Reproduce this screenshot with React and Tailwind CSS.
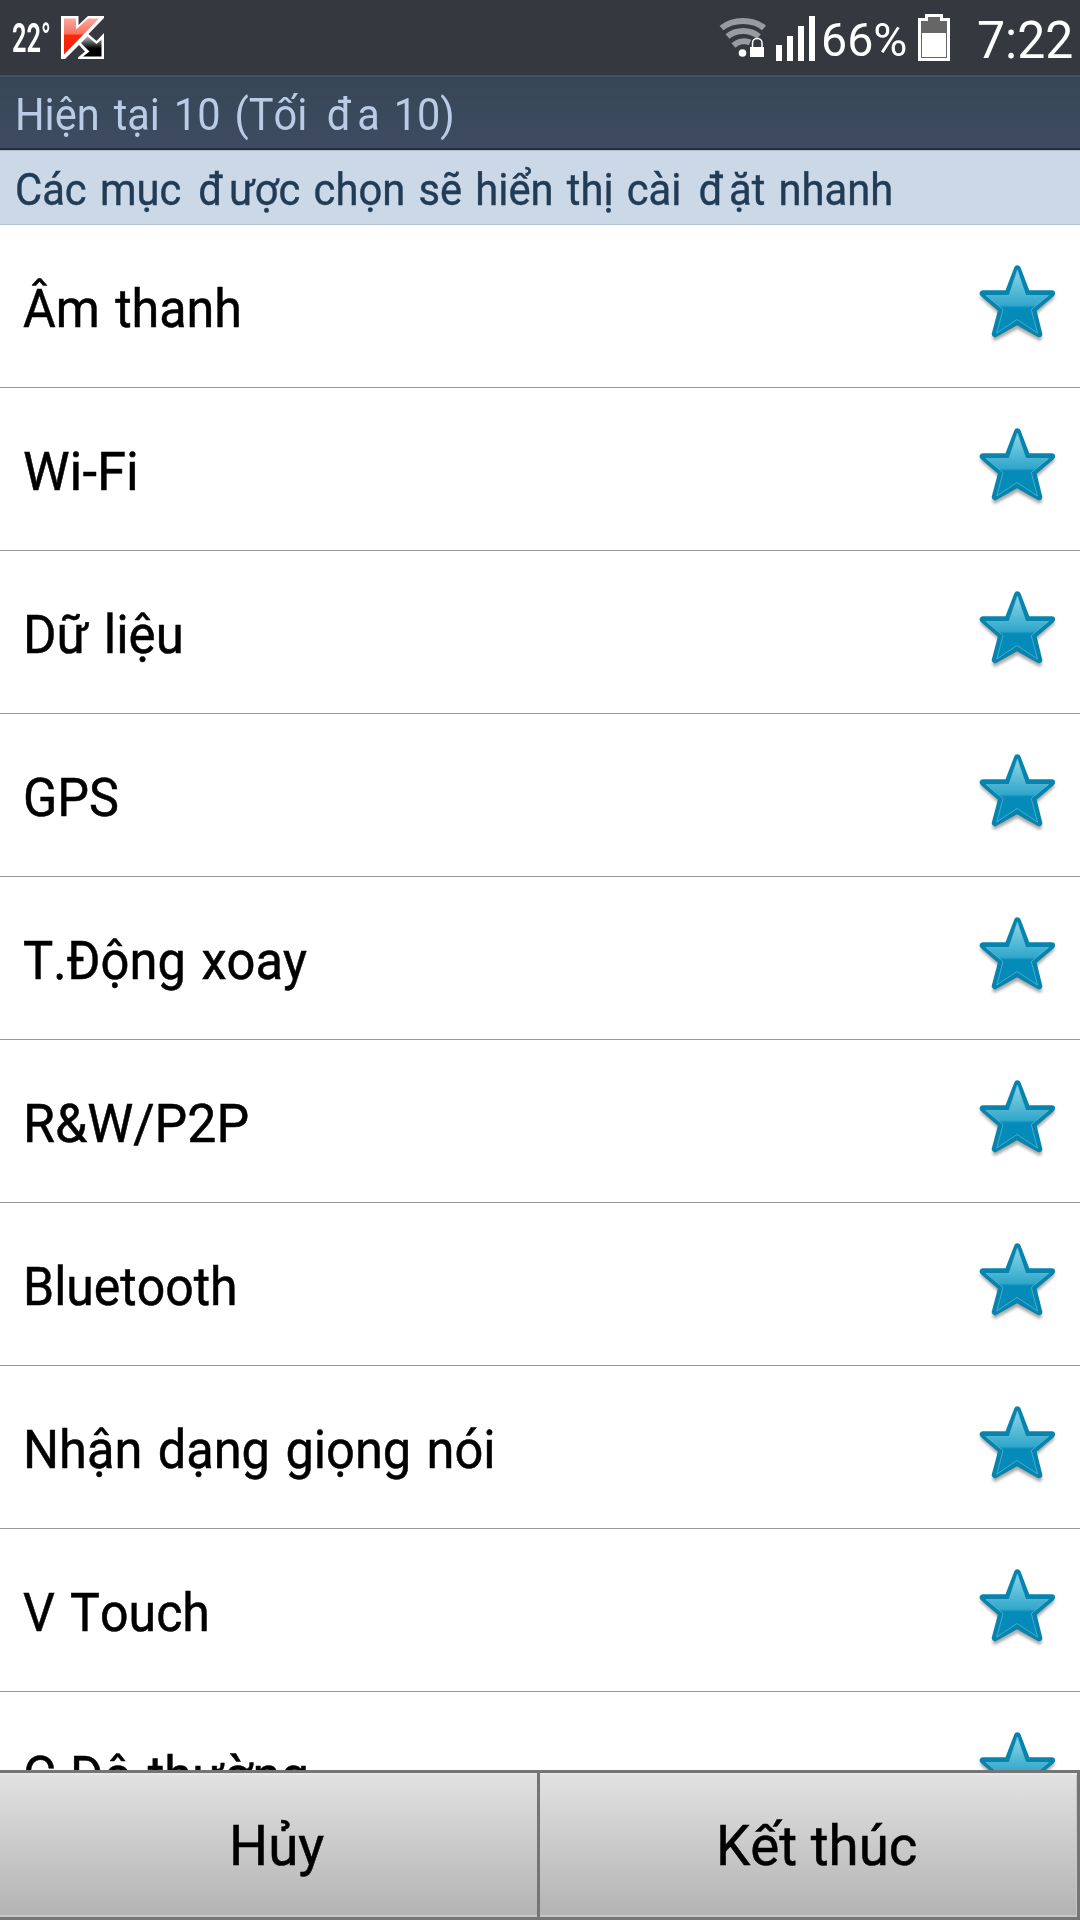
import React, { useLayoutEffect, useRef } from "react";

const rows = [
  { label: "Âm thanh", width: 219 },
  { label: "Wi-Fi", width: 116 },
  { label: "Dữ liệu", width: 161 },
  { label: "GPS", width: 96 },
  { label: "T.Động xoay", width: 284 },
  { label: "R&W/P2P", width: 226 },
  { label: "Bluetooth", width: 215 },
  { label: "Nhận dạng giọng nói", width: 473 },
  { label: "V Touch", width: 187 },
  { label: "C.Độ thường", width: 286 },
];

// Condenses a line of text to a fixed width
const FitText = ({ width, className, children }) => {
  const ref = useRef(null);

  useLayoutEffect(() => {
    const el = ref.current;
    el.style.transform = `scaleX(${width / el.offsetWidth})`;
  }, [width]);

  return (
    <span className={`block ${className || ""}`} style={{ width }}>
      <span ref={ref} className="inline-block origin-left whitespace-pre">
        {children}
      </span>
    </span>
  );
};

const Star = () => (
  <svg width="80" height="84" viewBox="0 0 80 84" className="mb-[3px] shrink-0">
    <defs>
      <linearGradient id="starFill" x1="0" y1="0" x2="0" y2="1">
        <stop offset="0" stopColor="#8bd6e6" />
        <stop offset="0.56" stopColor="#31a7cb" />
        <stop offset="0.6" stopColor="#058bba" />
        <stop offset="1" stopColor="#058bba" />
      </linearGradient>
      <filter id="starShadow" x="-20%" y="-20%" width="140%" height="140%">
        <feGaussianBlur stdDeviation="1.5" />
      </filter>
    </defs>
    <path
      d="M39.4 9 L49 34 L74 34 L55 51 L61.500 75 L39.400 63 L17 75 L24 51 L5 34 L29.500 34 Z"
      fill="#555"
      stroke="#555"
      strokeWidth="5"
      strokeLinejoin="round"
      opacity="0.5"
      filter="url(#starShadow)"
    />
    <path
      d="M39.4 5.500 L49 30.500 L73.800 30.500 L55 46.500 L61 71 L39 58.500 L17 71 L23.500 46.500 L5 30.500 L29.800 30.500 Z"
      fill="#0784ae"
      stroke="#0784ae"
      strokeWidth="6.500"
      strokeLinejoin="round"
    />
    <path
      d="M39.4 7 L47.800 32.500 L70.500 32.500 L53.300 46.500 L59.500 70 L39 56.500 L18.800 70 L25 46.500 L8 32.500 L31 32.500 Z"
      fill="url(#starFill)"
      stroke="#6cc3dc"
      strokeOpacity="0.6"
      strokeWidth="1"
      strokeLinejoin="round"
    />
  </svg>
);

const KasperskyIcon = () => (
  <svg width="44" height="44" viewBox="0 0 44 44">
    <defs>
      <linearGradient id="kRed" x1="0" y1="0" x2="0" y2="1">
        <stop offset="0" stopColor="#fba9a0" />
        <stop offset="0.43" stopColor="#f8705c" />
        <stop offset="0.46" stopColor="#f92a0a" />
        <stop offset="1" stopColor="#f51f00" />
      </linearGradient>
      <linearGradient id="kBlack" x1="0" y1="0" x2="0" y2="1">
        <stop offset="0.1" stopColor="#999" />
        <stop offset="0.6" stopColor="#000" />
      </linearGradient>
    </defs>
    <path
      d="M0 0H17.500V9L27 0H43V2L27.500 18L35.500 25L43 17V43H17V41.500L24 35.500L18 29L4 43H0Z"
      fill="#fff"
    />
    <path d="M3 2.500H15V13.500L27 2.500H38L3 38.500Z" fill="url(#kRed)" />
    <path
      d="M26.500 20.500L35.500 28L40.500 23.500V40.500H22L28.500 35.500L20 27Z"
      fill="url(#kBlack)"
    />
  </svg>
);

const WifiIcon = () => (
  <svg width="48" height="44" viewBox="0 0 48 44">
    <g fill="none" stroke="#9a9ba0" strokeWidth="6">
      <path d="M2.500 11 C14 1.500 34 1.500 45 11" />
      <path d="M8.500 19.500 C17 12 31 12 40 19.500" />
      <path d="M14.500 28.500 C20 23.500 27 23.500 31 25.500" />
    </g>
    <circle cx="23.500" cy="36" r="3.800" fill="#fff" />
    <path d="M29 28h19v14h-19z" fill="#36383f" />
    <path
      d="M33.500 31v-5c0-6 9.500-6 9.500 0v5"
      fill="#36383f"
      stroke="#fff"
      strokeWidth="1.500"
    />
    <path d="M31 30h14v10h-14z" fill="#fff" />
  </svg>
);

const BatteryIcon = () => (
  <svg width="32" height="47" viewBox="0 0 32 47">
    <path d="M0 4H7V0H25V4H32V47H0Z" fill="#fff" />
    <path d="M3 7H10V3H22V7H29V44H3Z" fill="#666" />
    <path d="M4 19H28V43H4Z" fill="#fff" />
  </svg>
);

const StatusBar = () => (
  <header className="flex h-[75px] shrink-0 items-start bg-[#36383f] text-white">
    <div className="flex h-full pt-4 pl-3">
      <FitText width={39} className="-mt-[3px] text-[41px] leading-[50px] font-semibold">
        22°
      </FitText>
      <div className="ml-2.5">
        <KasperskyIcon />
      </div>
    </div>
    <div className="ml-auto flex h-full">
      <div className="pt-[17px]">
        <WifiIcon />
      </div>
      <div className="ml-[9px] flex h-[61px] items-end gap-[5px]">
        <i className="h-4 w-1.5 bg-white" />
        <i className="h-[25px] w-1.5 bg-white" />
        <i className="h-[35px] w-1.5 bg-white" />
        <i className="h-[45px] w-1.5 bg-white" />
      </div>
      <FitText width={86} className="ml-[6px] pt-[13px] text-[46px] leading-[54px]">
        66%
      </FitText>
      <div className="ml-[11px] pt-3.5">
        <BatteryIcon />
      </div>
      <FitText width={96} className="mr-[7px] ml-[27px] pt-[13px] text-[51px] leading-[56px]">
        7:22
      </FitText>
    </div>
  </header>
);

export default function App() {
  return (
    <div className="flex h-[1920px] w-[1080px] flex-col overflow-hidden bg-white font-['Roboto',sans-serif] text-black [font-kerning:none]">
      <StatusBar />
      <div className="flex h-[75px] shrink-0 items-center border-t-2 border-b-2 border-t-[#3d5168] border-b-[#26303c] bg-linear-to-b from-[#374655] to-[#3e4b63] pt-1 pl-[15px] text-[45px] leading-[60px] text-[#bacce5]">
        <FitText width={440} className="[word-spacing:4px]">
          Hiện tại 10 (Tối <span className="mr-1.5 ml-1.5">đ</span>a 10)
        </FitText>
      </div>
      <div className="flex h-[75px] shrink-0 items-center border-t border-b border-t-[#b0bac5] border-b-[#b2c0d1] bg-[#cbd8e8] pt-1 pl-[15px] text-[44px] leading-[60px] text-[#233c55] [-webkit-text-stroke:0.4px]">
        <FitText width={878} className="[word-spacing:3px]">
          Các mục <span className="mr-1.5 ml-1">đ</span>ược chọn sẽ hiển thị cài{" "}
          <span className="mr-1.5 ml-1">đ</span>ặt nhanh
        </FitText>
      </div>
      <main className="min-h-0 flex-1 overflow-hidden">
        {rows.map((row) => (
          <div
            key={row.label}
            className="flex h-[163px] items-center justify-between border-b border-[#999] pr-[22px] pl-[23px]"
          >
            <FitText
              width={row.width}
              className="pt-1.5 text-[53px] leading-[70px] [-webkit-text-stroke:0.5px] [word-spacing:3px]"
            >
              {row.label}
            </FitText>
            <Star />
          </div>
        ))}
      </main>
      <footer className="flex h-[150px] shrink-0 border-t-[3px] border-b-[3px] border-[#757575]">
        <button className="flex w-[540px] items-center justify-center border-r-[3px] border-[#757575] bg-linear-to-b from-[#e2e2e2] to-[#b3b3b3] pt-0.5 pl-4 text-[56px] leading-[70px] shadow-[inset_0_2px_0_#e8e8e8,inset_0_-2px_0_#c6c6c6] [-webkit-text-stroke:0.5px]">
          <FitText width={95}>Hủy</FitText>
        </button>
        <button className="flex w-[540px] items-center justify-center border-r-[3px] border-[#757575] bg-linear-to-b from-[#e2e2e2] to-[#b3b3b3] pt-0.5 pl-4 text-[56px] leading-[70px] shadow-[inset_0_2px_0_#e8e8e8,inset_-1px_-2px_0_#c6c6c6] [-webkit-text-stroke:0.5px]">
          <FitText width={201}>Kết thúc</FitText>
        </button>
      </footer>
    </div>
  );
}
